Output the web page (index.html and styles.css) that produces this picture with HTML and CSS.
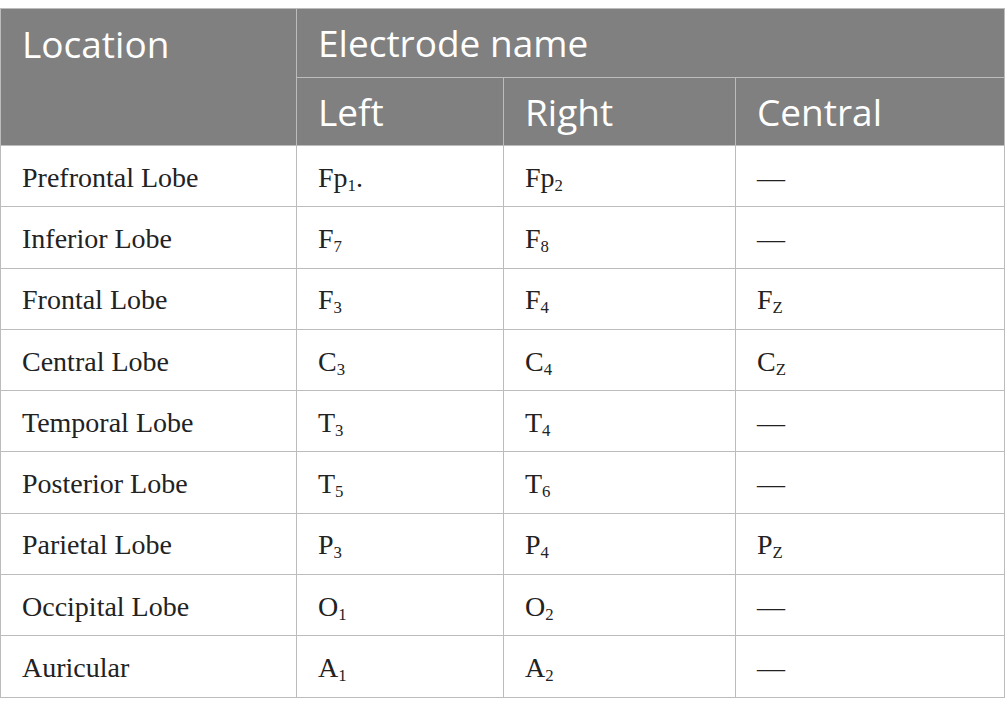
FILE: index.html
```html
<!DOCTYPE html>
<html>
<head>
<meta charset="utf-8">
<link rel="stylesheet" href="styles.css">
</head>
<body>
<table class="grid">
  <colgroup>
    <col class="c-loc"><col class="c-left"><col class="c-right"><col class="c-central">
  </colgroup>
  <thead>
    <tr class="h1">
      <th rowspan="2" class="top">Location</th>
      <th colspan="3">Electrode name</th>
    </tr>
    <tr class="h2">
      <th>Left</th>
      <th>Right</th>
      <th>Central</th>
    </tr>
  </thead>
  <tbody>
    <tr><td>Prefrontal Lobe</td><td>Fp<sub>1</sub>.</td><td>Fp<sub>2</sub></td><td>—</td></tr>
    <tr><td>Inferior Lobe</td><td>F<sub>7</sub></td><td>F<sub>8</sub></td><td>—</td></tr>
    <tr><td>Frontal Lobe</td><td>F<sub>3</sub></td><td>F<sub>4</sub></td><td>F<sub>Z</sub></td></tr>
    <tr><td>Central Lobe</td><td>C<sub>3</sub></td><td>C<sub>4</sub></td><td>C<sub>Z</sub></td></tr>
    <tr><td>Temporal Lobe</td><td>T<sub>3</sub></td><td>T<sub>4</sub></td><td>—</td></tr>
    <tr><td>Posterior Lobe</td><td>T<sub>5</sub></td><td>T<sub>6</sub></td><td>—</td></tr>
    <tr><td>Parietal Lobe</td><td>P<sub>3</sub></td><td>P<sub>4</sub></td><td>P<sub>Z</sub></td></tr>
    <tr><td>Occipital Lobe</td><td>O<sub>1</sub></td><td>O<sub>2</sub></td><td>—</td></tr>
    <tr><td>Auricular</td><td>A<sub>1</sub></td><td>A<sub>2</sub></td><td>—</td></tr>
  </tbody>
</table>
</body>
</html>
```

FILE: styles.css
```css
html, body {
  margin: 0;
  padding: 0;
  background: #ffffff;
}
body {
  padding-top: 8px;
}
.grid {
  width: 1004px;
  border-collapse: collapse;
  table-layout: fixed;
}
.c-loc { width: 296px; }
.c-left { width: 207px; }
.c-right { width: 232px; }
.c-central { width: 269px; }

.grid th, .grid td {
  border: 1px solid #bcbcbc;
  padding: 0 0 0 21px;
  text-align: left;
}
.grid th {
  background: #7f807f;
  color: #ffffff;
  font-family: "Open Sans", "DejaVu Sans", sans-serif;
  font-weight: 400;
  font-size: 37px;
  line-height: 40px;
  vertical-align: middle;
}
.grid th.top {
  vertical-align: top;
  padding-top: 15px;
}
.h1 th { height: 68px; }
.h2 th { height: 67px; }

.grid td {
  font-family: "Liberation Serif", "Times New Roman", serif;
  font-size: 28px;
  line-height: 30px;
  color: #222222;
  height: 61.3px;
  vertical-align: middle;
  padding-top: 3px;
  box-sizing: border-box;
}
.grid sub {
  font-size: 0.6em;
  line-height: 0;
  vertical-align: -0.22em;
}
```
